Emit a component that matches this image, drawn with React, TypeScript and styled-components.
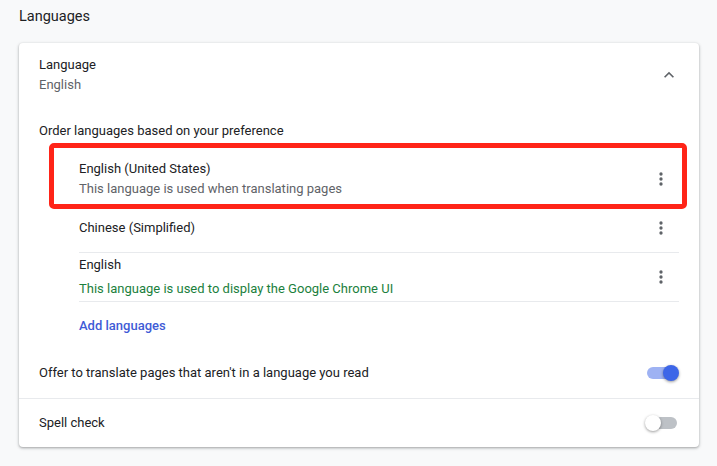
import React from 'react';
import styled, { createGlobalStyle } from 'styled-components';

const GlobalStyle = createGlobalStyle`
  html, body {
    margin: 0;
    padding: 0;
    background: #f8f9fa;
  }

  body {
    font-family: Roboto, 'Noto Sans', Arial, sans-serif;
    font-size: 13px;
    color: #202124;
    -webkit-font-smoothing: antialiased;
  }
`;

const Page = styled.div`
  padding: 7px 18px 0 19px;
  height: 466px;
  box-sizing: border-box;
`;

const SectionTitle = styled.h2`
  margin: 0 0 16px;
  font-size: 14.5px;
  font-weight: 400;
  line-height: 20px;
  color: #202124;
`;

const Card = styled.div`
  background: #fff;
  border-radius: 4px;
  box-shadow: 0 1px 2px 0 rgba(60, 64, 67, 0.3),
    0 1px 3px 1px rgba(60, 64, 67, 0.15);
`;

const ExpandRow = styled.div`
  height: 62px;
  padding: 2px 12px 0 20px;
  box-sizing: border-box;
  display: flex;
  align-items: center;
  justify-content: space-between;
`;

const Stack = styled.div`
  display: flex;
  flex-direction: column;
`;

const Primary = styled.div<{ $lh?: number }>`
  line-height: ${(p) => p.$lh ?? 20}px;
  color: #202124;
`;

const Secondary = styled.div<{ $lh?: number; $tone?: 'grey' | 'green' }>`
  line-height: ${(p) => p.$lh ?? 20}px;
  color: ${(p) => (p.$tone === 'green' ? '#1b7f3d' : '#5f6368')};
`;

const IconButton = styled.button`
  width: 36px;
  height: 36px;
  padding: 0;
  border: 0;
  background: none;
  display: flex;
  align-items: center;
  justify-content: center;
  color: #5f6368;
  cursor: pointer;
  flex-shrink: 0;
`;

const Section = styled.div`
  padding: 0 20px;
`;

const ListLabel = styled.div`
  margin-top: 16px;
  line-height: 20px;
`;

const LangList = styled.div`
  margin: 7px 0 0 40px;
`;

const LangItem = styled.div<{ $height: number; $padTop?: number; $padBottom?: number; $divider?: boolean; $marked?: boolean }>`
  position: relative;
  height: ${(p) => p.$height}px;
  padding-top: ${(p) => p.$padTop ?? 0}px;
  padding-bottom: ${(p) => p.$padBottom ?? 0}px;
  box-sizing: border-box;
  display: flex;
  align-items: center;
  justify-content: space-between;
  margin-right: 0;
  border-top: ${(p) => (p.$divider ? '1px solid #e8eaed' : '0')};

  ${(p) =>
    p.$marked &&
    `
    &::after {
      content: '';
      position: absolute;
      top: -5px;
      left: -30px;
      right: -8px;
      bottom: -1px;
      border: 5px solid #ff2418;
      border-radius: 5px;
      pointer-events: none;
    }
  `}
`;

const AddLink = styled.a`
  display: flex;
  align-items: center;
  height: 46px;
  border-top: 1px solid #e8eaed;
  color: #3f5bd6;
  font-weight: 500;
  text-decoration: none;
  cursor: pointer;
`;

const ToggleRow = styled.div<{ $height: number; $divider?: boolean }>`
  height: ${(p) => p.$height}px;
  padding: 0 20px;
  display: flex;
  align-items: center;
  justify-content: space-between;
  border-top: ${(p) => (p.$divider ? '1px solid #e8eaed' : '0')};
`;

const Toggle = styled.div`
  position: relative;
  width: 34px;
  height: 16px;
  flex-shrink: 0;
`;

const Track = styled.div<{ $on: boolean }>`
  position: absolute;
  top: 2px;
  left: 2px;
  right: 2px;
  height: 12px;
  border-radius: 6px;
  background: ${(p) => (p.$on ? '#9eb2f3' : '#bdc1c6')};
`;

const Knob = styled.div<{ $on: boolean }>`
  position: absolute;
  top: 0;
  left: ${(p) => (p.$on ? 18 : 0)}px;
  width: 16px;
  height: 16px;
  border-radius: 50%;
  background: ${(p) => (p.$on ? '#3d66e8' : '#fff')};
  box-shadow: 0 1px 3px 0 rgba(0, 0, 0, 0.4);
`;

function MoreVert() {
  return (
    <svg width="20" height="20" viewBox="0 0 24 24" fill="currentColor">
      <circle cx="12" cy="6" r="2" />
      <circle cx="12" cy="12" r="2" />
      <circle cx="12" cy="18" r="2" />
    </svg>
  );
}

function ExpandLess() {
  return (
    <svg width="20" height="20" viewBox="0 0 24 24" fill="currentColor">
      <path d="M12 8l-6 6 1.41 1.41L12 10.83l4.59 4.58L18 14z" />
    </svg>
  );
}

function Switch({ on }: { on: boolean }) {
  return (
    <Toggle role="switch" aria-checked={on}>
      <Track $on={on} />
      <Knob $on={on} />
    </Toggle>
  );
}

export default function App() {
  return (
    <Page>
      <GlobalStyle />
      <SectionTitle>Languages</SectionTitle>
      <Card>
        <ExpandRow>
          <Stack>
            <Primary>Language</Primary>
            <Secondary>English</Secondary>
          </Stack>
          <IconButton aria-label="Collapse">
            <ExpandLess />
          </IconButton>
        </ExpandRow>

        <Section>
          <ListLabel>Order languages based on your preference</ListLabel>
          <LangList>
            <LangItem $height={60} $padTop={2} $marked>
              <Stack>
                <Primary>English (United States)</Primary>
                <Secondary>This language is used when translating pages</Secondary>
              </Stack>
              <IconButton aria-label="More actions">
                <MoreVert />
              </IconButton>
            </LangItem>
            <LangItem $height={44} $padBottom={5}>
              <Primary>Chinese (Simplified)</Primary>
              <IconButton aria-label="More actions">
                <MoreVert />
              </IconButton>
            </LangItem>
            <LangItem $height={49} $divider>
              <Stack>
                <Primary $lh={24}>English</Primary>
                <Secondary $lh={24} $tone="green">
                  This language is used to display the Google Chrome UI
                </Secondary>
              </Stack>
              <IconButton aria-label="More actions">
                <MoreVert />
              </IconButton>
            </LangItem>
            <AddLink>Add languages</AddLink>
          </LangList>
        </Section>

        <ToggleRow $height={50}>
          <Primary>Offer to translate pages that aren't in a language you read</Primary>
          <Switch on />
        </ToggleRow>
        <ToggleRow $height={48} $divider>
          <Primary>Spell check</Primary>
          <Switch on={false} />
        </ToggleRow>
      </Card>
    </Page>
  );
}
